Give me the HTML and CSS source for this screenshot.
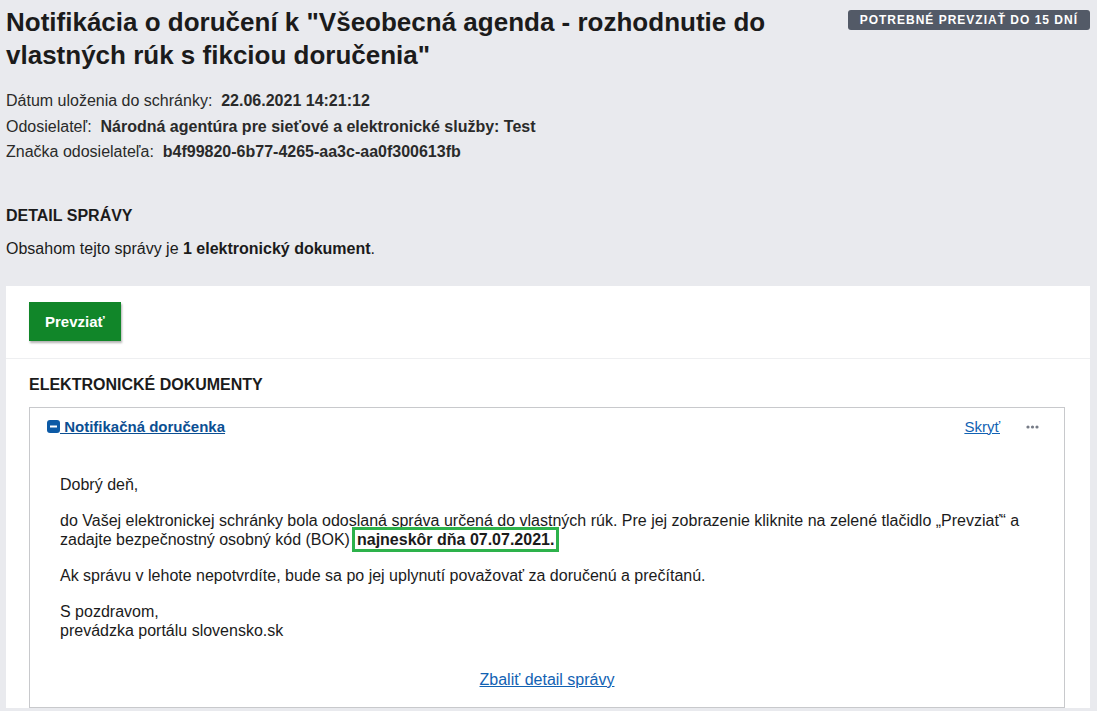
FILE: index.html
```html
<!DOCTYPE html>
<html lang="sk">
<head>
<meta charset="UTF-8">
<meta name="viewport" content="width=device-width, initial-scale=1.0">
<title>Notifikácia o doručení</title>
<link rel="stylesheet" href="styles.css">
</head>
<body>
<div class="page">
    <div class="head">
        <h1 class="title">Notifikácia o doručení k "Všeobecná agenda - rozhodnutie do vlastných rúk s fikciou doručenia"</h1>
        <span class="badge">Potrebné prevziať do 15 dní</span>
    </div>

    <div class="meta">
        <div>Dátum uloženia do schránky:&nbsp; <b>22.06.2021 14:21:12</b></div>
        <div>Odosielateľ:&nbsp; <b>Národná agentúra pre sieťové a elektronické služby: Test</b></div>
        <div>Značka odosielateľa:&nbsp; <b>b4f99820-6b77-4265-aa3c-aa0f300613fb</b></div>
    </div>

    <h2 class="section-title">DETAIL SPRÁVY</h2>
    <p class="summary">Obsahom tejto správy je <b>1 elektronický dokument</b>.</p>

    <div class="panel">
        <div class="actions">
            <button class="take-btn">Prevziať</button>
        </div>
        <div class="docs">
            <h3 class="docs-title">ELEKTRONICKÉ DOKUMENTY</h3>
            <div class="doc">
                <div class="doc-head">
                    <a href="#" class="doc-name">
                        <svg class="toggle" width="13" height="13" viewBox="0 0 13 13"><rect width="13" height="13" rx="3" fill="#0c5aa6"/><rect x="3" y="5.5" width="7" height="2" fill="#fff"/></svg> Notifikačná doručenka</a>
                    <div class="doc-tools">
                        <a href="#" class="link">Skryť</a>
                        <svg class="more" width="13" height="4" viewBox="0 0 13 4"><circle cx="2" cy="2" r="1.6" fill="#767b86"/><circle cx="6.5" cy="2" r="1.6" fill="#767b86"/><circle cx="11" cy="2" r="1.6" fill="#767b86"/></svg>
                    </div>
                </div>
                <div class="doc-body">
                    <p>Dobrý deň,</p>
                    <p>do Vašej elektronickej schránky bola odoslaná správa určená do vlastných rúk. Pre jej zobrazenie kliknite na zelené tlačidlo „Prevziať“ a zadajte bezpečnostný osobný kód (BOK)<span class="mark">najneskôr dňa 07.07.2021.</span></p>
                    <p>Ak správu v lehote nepotvrdíte, bude sa po jej uplynutí považovať za doručenú a prečítanú.</p>
                    <p>S pozdravom,<br>prevádzka portálu slovensko.sk</p>
                    <div class="collapse"><a href="#" class="link">Zbaliť detail správy</a></div>
                </div>
            </div>
        </div>
    </div>
</div>
</body>
</html>
```

FILE: styles.css
```css
body {
    margin: 0;
    background-color: #e9eaee;
    font-family: "Liberation Sans", Arial, sans-serif;
    font-size: 16px;
    color: #1b1b1b;
}
.page {
    padding: 6px 7px 0 6px;
}
.head {
    display: flex;
    justify-content: space-between;
    align-items: flex-start;
}
.title {
    margin: 0;
    font-size: 26px;
    line-height: 33px;
    font-weight: bold;
    max-width: 800px;
}
.badge {
    margin-top: 4px;
    padding: 0 12px;
    height: 20px;
    line-height: 20px;
    background-color: #535a67;
    color: #fff;
    border-radius: 3px;
    font-size: 12px;
    font-weight: bold;
    letter-spacing: 1px;
    text-transform: uppercase;
    white-space: nowrap;
}
.meta {
    margin-top: 16px;
    line-height: 25.5px;
}
.meta div {
    color: #2a2a2a;
}
.section-title {
    margin: 41px 0 0;
    font-size: 16px;
    line-height: 20px;
    font-weight: bold;
}
.summary {
    margin: 13px 0 0;
    line-height: 20px;
}
.panel {
    margin-top: 27px;
    background-color: #fff;
}
.actions {
    padding: 16px 23px 17px;
    border-bottom: 1px solid #eeeff1;
}
.take-btn {
    height: 39px;
    padding: 0 16px;
    background-color: #118629;
    color: #fff;
    border: none;
    font-family: inherit;
    font-size: 15px;
    font-weight: bold;
    box-shadow: 1px 2px 2px rgba(0, 0, 0, 0.3);
    cursor: pointer;
}
.docs {
    padding: 16px 25px 0 23px;
}
.docs-title {
    margin: 0;
    font-size: 16px;
    line-height: 20px;
    font-weight: bold;
}
.doc {
    margin-top: 12px;
    border: 1px solid #c8c9cc;
}
.doc-head {
    display: flex;
    justify-content: space-between;
    align-items: center;
    padding: 9px 25px 0 17px;
    line-height: 20px;
    font-size: 15px;
}
.doc-name {
    color: #0b4f93;
    font-weight: bold;
}
.toggle {
    vertical-align: -1px;
}
.doc-tools {
    display: flex;
    align-items: center;
    gap: 26px;
}
.link {
    color: #1262b3;
}
.doc-body {
    padding: 38px 30px 18px;
    line-height: 19px;
}
.doc-body p {
    margin: 0 0 17px;
}
.mark {
    margin-left: 2px;
    font-weight: bold;
    padding: 1px 2px;
    border: 3px solid #2db24b;
}
.collapse {
    margin-top: 30px;
    text-align: center;
}
```
